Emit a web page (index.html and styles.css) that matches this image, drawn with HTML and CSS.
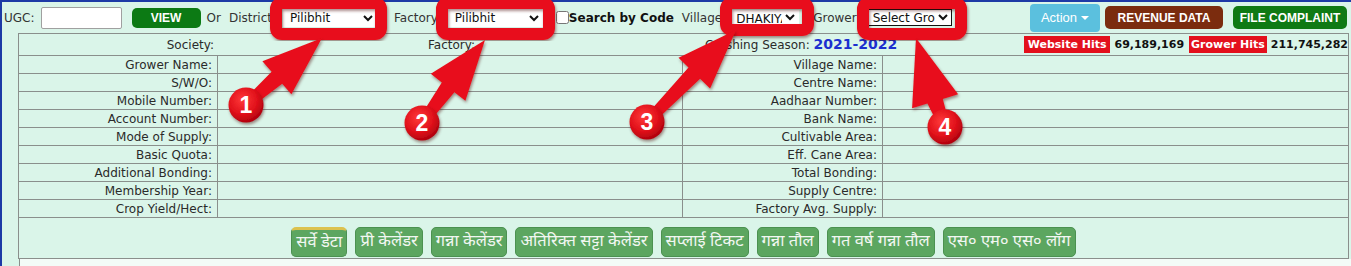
FILE: index.html
```html
<!DOCTYPE html>
<html>
<head>
<meta charset="utf-8">
<title>Grower Info</title>
<link rel="stylesheet" href="styles.css">
</head>
<body>
<div class="page">
  <div class="topbar">
    <span class="lbl ugc">UGC:</span>
    <input class="ugc-input" type="text">
    <button class="btn btn-view">VIEW</button>
    <span class="lbl or">Or</span>
    <span class="lbl district">District</span>
    <select class="sel sel-district"><option>Pilibhit</option></select>
    <span class="lbl factory">Factory</span>
    <select class="sel sel-factory"><option>Pilibhit</option></select>
    <input class="chk" type="checkbox"><b class="sbc">Search by Code</b>
    <span class="lbl village">Village</span>
    <select class="sel sel-village"><option>DHAKIYA</option></select>
    <span class="lbl grower">Grower</span>
    <select class="sel sel-grower"><option>Select Grower</option></select>
    <div class="actions">
      <button class="btn btn-action">Action <span class="caret"></span></button>
      <button class="btn btn-revenue">REVENUE DATA</button>
      <button class="btn btn-complaint">FILE COMPLAINT</button>
    </div>
  </div>

  <table class="info">
    <colgroup>
      <col class="c1"><col class="c2"><col class="c3"><col class="c4">
    </colgroup>
    <tr class="head">
      <td colspan="4">
        <div class="headrow">
          <span class="soc">Society:</span>
          <span class="fac">Factory:</span>
          <span class="season">Crushing Season: <b class="yr">2021-2022</b></span>
          <span class="hits">
            <span class="hit-lbl">Website Hits</span><span class="hit-val">69,189,169</span><span class="hit-lbl hit-lbl2">Grower Hits</span><span class="hit-val">211,745,282</span>
          </span>
        </div>
      </td>
    </tr>
    <tr class="r"><td class="lab">Grower Name:</td><td></td><td class="lab">Village Name:</td><td></td></tr>
    <tr class="r"><td class="lab">S/W/O:</td><td></td><td class="lab">Centre Name:</td><td></td></tr>
    <tr class="r"><td class="lab">Mobile Number:</td><td></td><td class="lab">Aadhaar Number:</td><td></td></tr>
    <tr class="r"><td class="lab">Account Number:</td><td></td><td class="lab">Bank Name:</td><td></td></tr>
    <tr class="r"><td class="lab">Mode of Supply:</td><td></td><td class="lab">Cultivable Area:</td><td></td></tr>
    <tr class="r"><td class="lab">Basic Quota:</td><td></td><td class="lab">Eff. Cane Area:</td><td></td></tr>
    <tr class="r"><td class="lab">Additional Bonding:</td><td></td><td class="lab">Total Bonding:</td><td></td></tr>
    <tr class="r"><td class="lab">Membership Year:</td><td></td><td class="lab">Supply Centre:</td><td></td></tr>
    <tr class="r"><td class="lab">Crop Yield/Hect:</td><td></td><td class="lab">Factory Avg. Supply:</td><td></td></tr>
    <tr class="tabs-row">
      <td colspan="4">
        <div class="tabs">
          <span class="tab active">सर्वे डेटा</span>
          <span class="tab">प्री केलेंडर</span>
          <span class="tab">गन्ना केलेंडर</span>
          <span class="tab">अतिरिक्त सट्टा केलेंडर</span>
          <span class="tab">सप्लाई टिकट</span>
          <span class="tab">गन्ना तौल</span>
          <span class="tab">गत वर्ष गन्ना तौल</span>
          <span class="tab">एस० एम० एस० लॉग</span>
        </div>
      </td>
    </tr>
  </table>
  <div class="below"></div>
</div>

<svg class="annot" width="1351" height="266" viewBox="0 0 1351 266" xmlns="http://www.w3.org/2000/svg">
  <defs>
    <filter id="sh" x="-20%" y="-20%" width="140%" height="140%">
      <feDropShadow dx="1" dy="2" stdDeviation="1.5" flood-color="#400" flood-opacity="0.45"/>
    </filter>
    <radialGradient id="cg" cx="40%" cy="35%" r="70%">
      <stop offset="0" stop-color="#ff3a3a"/>
      <stop offset="0.6" stop-color="#e0101a"/>
      <stop offset="1" stop-color="#a8000c"/>
    </radialGradient>
  </defs>
  <g fill="none" stroke="#e8101a" stroke-width="12" filter="url(#sh)">
    <rect x="276" y="3" width="105" height="31" rx="6"/>
    <rect x="442" y="3" width="107" height="31" rx="6"/>
    <rect x="726" y="3" width="82" height="27" rx="6"/>
    <rect x="863" y="3" width="98" height="31" rx="6"/>
  </g>
  <g fill="#e8101a" filter="url(#sh)">
    <polygon points="242.7,101.2 271.6,71.7 262.4,61.2 322,38 291.4,94.2 282.2,83.7 249.3,108.8"/>
    <polygon points="418.1,119.9 441.8,82.4 430.8,73.8 485,40 465.4,100.8 454.4,92.2 425.9,126.1"/>
    <polygon points="643.4,118.5 688.5,67.5 678.5,57.8 736,30 710.1,88.4 700.1,78.7 650.6,125.5"/>
    <polygon points="940.2,128.5 927.4,103.5 912.1,108.2 916,38 958.1,94.2 942.8,98.9 949.8,125.6"/>
  </g>
  <g filter="url(#sh)">
    <circle cx="246" cy="105" r="17.5" fill="url(#cg)"/>
    <circle cx="422" cy="123" r="17.5" fill="url(#cg)"/>
    <circle cx="647" cy="122" r="17.5" fill="url(#cg)"/>
    <circle cx="945" cy="127" r="17.5" fill="url(#cg)"/>
  </g>
  <g class="num" fill="#fff" text-anchor="middle">
    <text x="246" y="113">1</text>
    <text x="422" y="131">2</text>
    <text x="647" y="130">3</text>
    <text x="945" y="135">4</text>
  </g>
</svg>
</body>
</html>
```

FILE: styles.css
```css
* { box-sizing: border-box; }
html, body { margin: 0; padding: 0; }
body {
  width: 1351px;
  height: 266px;
  overflow: hidden;
  position: relative;
  background: #daf5e9;
  font-family: "DejaVu Sans", Verdana, sans-serif;
  font-size: 12px;
  color: #222;
}
.page {
  border-top: 2px solid #1d3aa6;
  border-left: 2px solid #1d3aa6;
  height: 266px;
}

/* ---------- top bar ---------- */
.topbar {
  display: flex;
  align-items: center;
  height: 31px;
  padding-left: 2px;
  padding-right: 4px;
  white-space: nowrap;
}
.lbl { color: #333; font-size: 12px; }
.ugc-input {
  margin-left: 6px;
  width: 81px;
  height: 22px;
  border: 1px solid #a0a0a0;
  border-radius: 2px;
  background: #fff;
  padding: 0;
}
.btn {
  border: none;
  color: #fff;
  font-family: "Liberation Sans", Arial, sans-serif;
  font-weight: bold;
  font-size: 12px;
  padding: 0;
  cursor: pointer;
}
.btn-view {
  margin-left: 10px;
  width: 69px;
  height: 20px;
  background: #0c7a14;
  border-radius: 5px;
  font-size: 12px;
}
.or { margin-left: 6px; }
.district { margin-left: 8px; }
.sel {
  height: 18px;
  font-family: "DejaVu Sans", Verdana, sans-serif;
  font-size: 12px;
  color: #111;
  background: #fff;
  border: 1px solid #fff;
  border-radius: 0;
  padding: 0 0 0 2px;
}
.sel-district { margin-left: 11px; width: 94px; }
.factory { margin-left: 17px; }
.sel-factory { margin-left: 10px; width: 95px; }
.chk { margin: 0 0 0 13px; width: 13px; height: 13px; }
.sbc { font-size: 12px; color: #111; }
.village { margin-left: 8px; }
.sel-village { margin-left: 7px; width: 70px; height: 15px; font-size: 12px; border-left-color: #333; }
.grower { margin-left: 14px; }
.sel-grower { margin-left: 9px; width: 86px; border: 1px solid #111; height: 17px; }

.actions { margin-left: auto; display: flex; align-items: center; }
.btn-action {
  width: 70px;
  height: 28px;
  background: #5bc0de;
  border-radius: 4px;
  font-weight: normal;
  font-size: 13px;
  display: flex;
  align-items: center;
  justify-content: center;
  gap: 4px;
}
.caret {
  display: inline-block;
  width: 0; height: 0;
  border-left: 4px solid transparent;
  border-right: 4px solid transparent;
  border-top: 4px solid #fff;
}
.btn-revenue {
  margin-left: 5px;
  width: 118px;
  height: 23px;
  background: #7b2c0e;
  border-radius: 5px;
}
.btn-complaint {
  margin-left: 10px;
  width: 114px;
  height: 23px;
  background: #0f7a14;
  border-radius: 5px;
}

/* ---------- info table ---------- */
.info {
  margin-left: 16px;
  width: 1330px;
  border-collapse: collapse;
  table-layout: fixed;
}
.info col.c1 { width: 199px; }
.info col.c2 { width: 465px; }
.info col.c3 { width: 200px; }
.info col.c4 { width: 466px; }
.info td {
  border: 1px solid #8a8f8c;
  padding: 0 5px;
  height: 18px;
  line-height: 16px;
  white-space: nowrap;
  overflow: hidden;
  color: #2a2a2a;
}
.info td.lab { text-align: right; }
.info tr.head td { height: 22px; padding: 0; }

.headrow { display: flex; align-items: center; height: 21px; }
.soc { width: 195px; text-align: right; }
.fac { width: 261px; text-align: right; }
.season { margin-left: 230px; }
.yr { color: #1b2fcf; font-size: 14px; }
.hits { margin-left: auto; display: flex; align-items: center; }
.hit-lbl {
  background: #e3101c;
  color: #fff;
  font-weight: bold;
  font-size: 11px;
  line-height: 17px;
  height: 17px;
  padding: 0 4px;
}
.hit-lbl2 { margin-left: 5px; padding: 0 2px; }
.hit-val { font-weight: bold; font-size: 11px; color: #111; margin-left: 4px; }

.info tr.tabs-row td { height: 41px; padding: 8px 0 1px; text-align: center; }
.tabs { display: flex; justify-content: center; gap: 8px; }
.tab {
  display: inline-block;
  height: 30px;
  line-height: 28px;
  padding: 0 4px;
  background: #5ca660;
  border: 1px solid #4b9150;
  border-radius: 5px;
  color: #f2f7f2;
  font-family: "Noto Sans Devanagari", "Lohit Devanagari", "Noto Sans", sans-serif;
  font-size: 16.5px;
}
.tab.active { border-top: 3px solid #dcc24e; line-height: 26px; }

.below {
  margin-left: 17px;
  height: 20px;
  background: #f3fbf7;
  border-left: 1px solid #8a8f8c;
}

/* ---------- annotations ---------- */
.annot {
  position: absolute;
  left: 0;
  top: 0;
  pointer-events: none;
}
.annot .num {
  font-family: "Liberation Sans", Arial, sans-serif;
  font-weight: bold;
  font-size: 23px;
}
```
